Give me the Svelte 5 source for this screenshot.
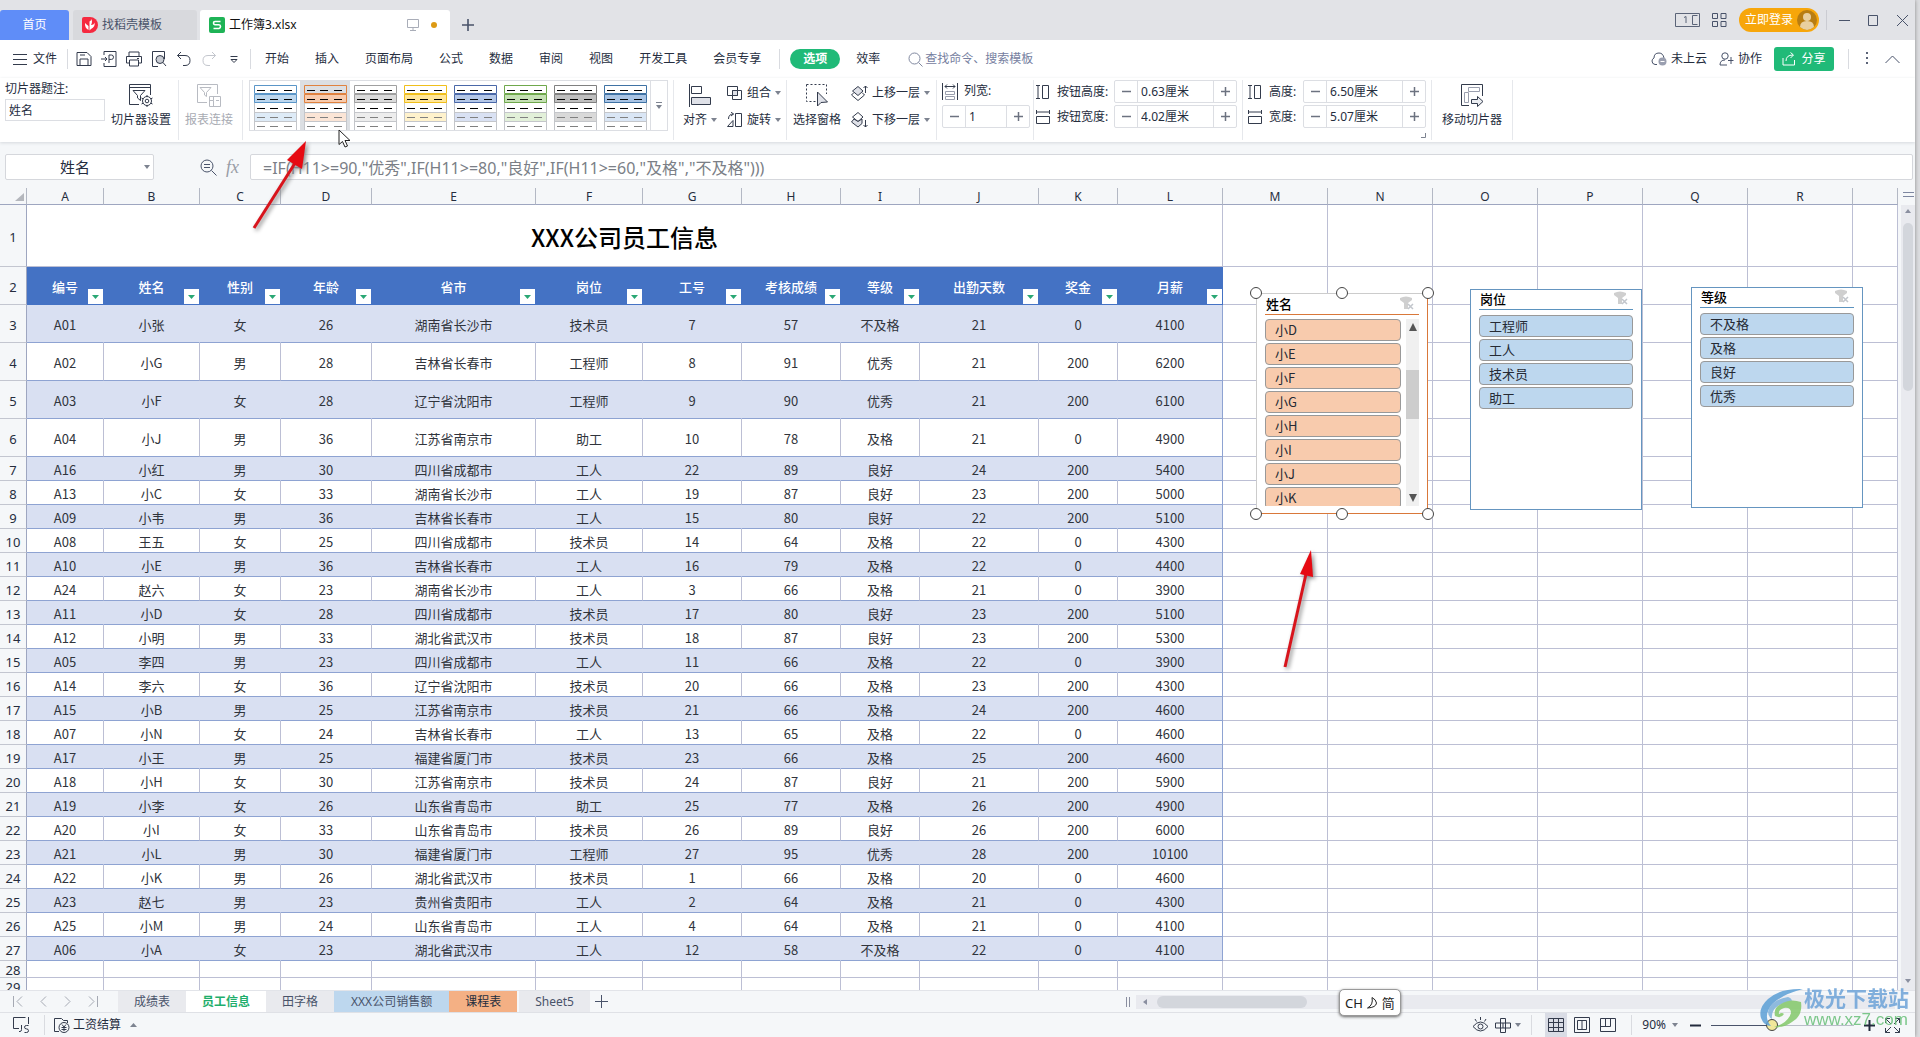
<script>
  const menus = ["开始", "插入", "页面布局", "公式", "数据", "审阅", "视图", "开发工具", "会员专享"];

  // line = frame colour, fill = selected item, soft = item without data
  const styles = [
    { line: "#5b96c8", fill: "#bdd7ee", soft: "#deebf7" },
    { line: "#e0823f", fill: "#f8cbad", soft: "#fbe5d6" },
    { line: "#a0a0a0", fill: "#dbdbdb", soft: "#ededed" },
    { line: "#f0bf1c", fill: "#ffe699", soft: "#fff2cc" },
    { line: "#4a68a8", fill: "#b4c7e7", soft: "#d9e1f3" },
    { line: "#6fa84c", fill: "#c5e0b4", soft: "#e2f0d9" },
    { line: "#808080", fill: "#bfbfbf", soft: "#d9d9d9" },
    { line: "#3f72a4", fill: "#a9c4e4", soft: "#dae6f5" }
  ];

  const columns = [
    { letter: "A", width: 77, title: "编号" },
    { letter: "B", width: 96, title: "姓名" },
    { letter: "C", width: 81, title: "性别" },
    { letter: "D", width: 91, title: "年龄" },
    { letter: "E", width: 164, title: "省市" },
    { letter: "F", width: 107, title: "岗位" },
    { letter: "G", width: 99, title: "工号" },
    { letter: "H", width: 99, title: "考核成绩" },
    { letter: "I", width: 79, title: "等级" },
    { letter: "J", width: 119, title: "出勤天数" },
    { letter: "K", width: 79, title: "奖金" },
    { letter: "L", width: 105, title: "月薪" }
  ];
  const emptyColumns = ["M", "N", "O", "P", "Q", "R"];
  const blanks = [0, 1, 2, 3, 4, 5, 6];

  const employees = [
    ["A01", "小张", "女", 26, "湖南省长沙市", "技术员", 7, 57, "不及格", 21, 0, 4100],
    ["A02", "小G", "男", 28, "吉林省长春市", "工程师", 8, 91, "优秀", 21, 200, 6200],
    ["A03", "小F", "女", 28, "辽宁省沈阳市", "工程师", 9, 90, "优秀", 21, 200, 6100],
    ["A04", "小J", "男", 36, "江苏省南京市", "助工", 10, 78, "及格", 21, 0, 4900],
    ["A16", "小红", "男", 30, "四川省成都市", "工人", 22, 89, "良好", 24, 200, 5400],
    ["A13", "小C", "女", 33, "湖南省长沙市", "工人", 19, 87, "良好", 23, 200, 5000],
    ["A09", "小韦", "男", 36, "吉林省长春市", "工人", 15, 80, "良好", 22, 200, 5100],
    ["A08", "王五", "女", 25, "四川省成都市", "技术员", 14, 64, "及格", 22, 0, 4300],
    ["A10", "小E", "男", 36, "吉林省长春市", "工人", 16, 79, "及格", 22, 0, 4400],
    ["A24", "赵六", "女", 23, "湖南省长沙市", "工人", 3, 66, "及格", 21, 0, 3900],
    ["A11", "小D", "女", 28, "四川省成都市", "技术员", 17, 80, "良好", 23, 200, 5100],
    ["A12", "小明", "男", 33, "湖北省武汉市", "技术员", 18, 87, "良好", 23, 200, 5300],
    ["A05", "李四", "男", 23, "四川省成都市", "工人", 11, 66, "及格", 22, 0, 3900],
    ["A14", "李六", "女", 36, "辽宁省沈阳市", "技术员", 20, 66, "及格", 23, 200, 4300],
    ["A15", "小B", "男", 25, "江苏省南京市", "技术员", 21, 66, "及格", 24, 200, 4600],
    ["A07", "小N", "女", 24, "吉林省长春市", "工人", 13, 65, "及格", 22, 0, 4600],
    ["A17", "小王", "男", 25, "福建省厦门市", "技术员", 23, 66, "及格", 25, 200, 4600],
    ["A18", "小H", "女", 30, "江苏省南京市", "技术员", 24, 87, "良好", 21, 200, 5900],
    ["A19", "小李", "女", 26, "山东省青岛市", "助工", 25, 77, "及格", 26, 200, 4900],
    ["A20", "小I", "女", 33, "山东省青岛市", "技术员", 26, 89, "良好", 26, 200, 6000],
    ["A21", "小L", "男", 30, "福建省厦门市", "工程师", 27, 95, "优秀", 28, 200, 10100],
    ["A22", "小K", "男", 26, "湖北省武汉市", "技术员", 1, 66, "及格", 20, 0, 4600],
    ["A23", "赵七", "男", 23, "贵州省贵阳市", "工人", 2, 64, "及格", 21, 0, 4300],
    ["A25", "小M", "男", 24, "山东省青岛市", "工人", 4, 64, "及格", 21, 0, 4100],
    ["A06", "小A", "女", 23, "湖北省武汉市", "工人", 12, 58, "不及格", 22, 0, 4100]
  ];
  const emptyRows = [28, 29];

  let names = ["小D", "小E", "小F", "小G", "小H", "小I", "小J", "小K"];
  let jobs = ["工程师", "工人", "技术员", "助工"];
  let grades = ["不及格", "及格", "良好", "优秀"];

  let selectedStyle = $state(1);
  let caption = $state("姓名");
  let zoom = $state(90);
</script>

{#snippet arrow()}
  <svg class="caret" width="6" height="4" viewBox="0 0 6 4"><path d="M0 0h6L3 4z" fill="#7d8390" /></svg>
{/snippet}

{#snippet spinner(id, value)}
  <div class="spinner">
    <button aria-label="减少"><svg width="9" height="9" viewBox="0 0 9 9"><path d="M0 4.5h9" /></svg></button>
    <input {id} type="text" {value} />
    <button aria-label="增加"><svg width="9" height="9" viewBox="0 0 9 9"><path d="M0 4.5h9M4.500 0v9" /></svg></button>
  </div>
{/snippet}

{#snippet clearFilter()}
  <button class="clear" aria-label="清除筛选器">
    <svg width="16" height="15" viewBox="0 0 16 15">
      <path d="M1 2q6-3 12 0v2l-4 3v6H5V7L1 4z" fill="#cfcfcf" />
      <path d="M9 8l5 5M14 8l-5 5" stroke="#c2c6cc" stroke-width="1.500" />
    </svg>
  </button>
{/snippet}

<div class="app">
  <header class="titlebar">
    <button class="home">首页</button>
    <button class="doc">
      <svg width="16" height="16" viewBox="0 0 16 16">
        <path d="M2 0h6a8 8 0 0 1 0 16H2q-2 0-2-2V2q0-2 2-2z" fill="#f5293f" />
        <path d="M7.500 13.500V4.500q2-1 1.500-2.500 2 2.500 0 6q3 0 3.500-2.500 1 4-3.500 6.500zM6.500 13Q2.500 11 3 6q2 2 3.500 3z" fill="#fff" />
      </svg>
      找稻壳模板
    </button>
    <button class="doc current">
      <svg width="16" height="16" viewBox="0 0 16 16">
        <rect width="16" height="16" rx="2" fill="#1eb356" />
        <path d="M11.500 4.500H6Q4.500 4.500 4.500 6T6 7.800h4q1.500 0 1.500 1.700T10 11.500H4.500" fill="none" stroke="#fff" stroke-width="1.600" />
      </svg>
      <span class="docname">工作簿3.xlsx</span>
      <svg width="12" height="12" viewBox="0 0 12 12" fill="none" stroke="#a9adb8"><path d="M.5.5h11v8H.5zM6 8.500v3M3 11.500h6" /></svg>
      <i class="dot"></i>
    </button>
    <button class="plain" aria-label="新建"><svg width="12" height="12" viewBox="0 0 12 12"><path d="M0 6h12M6 0v12" stroke="#49536a" stroke-width="1.600" /></svg></button>
    <div class="window-tools">
      <svg width="25" height="14" viewBox="0 0 25 14" fill="none" stroke="#5b6478"><path d="M.5.5h24v13H.5zM9 4.500l2-1V10M17.500 2.500h5M17.500 2.500v9h5" /></svg>
      <svg width="15" height="14" viewBox="0 0 15 14" fill="none" stroke="#49536a"><path d="M.5.5h5v5h-5zM9 .5h5v5H9zM.5 8.500h5v5h-5zM9 8.500h5v5H9z" /></svg>
      <button class="login">
        立即登录
        <svg width="20" height="20" viewBox="0 0 20 20">
          <circle cx="10" cy="10" r="10" fill="#b87d12" />
          <circle cx="10" cy="7" r="4" fill="#e9cf9f" />
          <path d="M3 17q0-6 7-6t7 6q-7 6-14 0z" fill="#e9cf9f" />
        </svg>
      </button>
      <i class="sep"></i>
      <button class="plain" aria-label="最小化"><svg width="11" height="11" viewBox="0 0 11 11"><path d="M0 5.500h11" stroke="#49536a" /></svg></button>
      <button class="plain" aria-label="最大化"><svg width="11" height="11" viewBox="0 0 11 11"><path d="M.5.5h9v10h-9z" fill="none" stroke="#49536a" /></svg></button>
      <button class="plain" aria-label="关闭"><svg width="11" height="11" viewBox="0 0 11 11"><path d="M0 0l11 11M11 0L0 11" stroke="#49536a" /></svg></button>
    </div>
  </header>

  <nav class="menubar">
    <button class="file">
      <svg width="14" height="11" viewBox="0 0 14 11"><path d="M0 .5h14M0 5.500h14M0 10.500h14" stroke="#333b4c" /></svg>
      文件
    </button>
    <i class="sep"></i>
    <div class="quick">
      <button class="plain" aria-label="保存"><svg width="16" height="16" viewBox="0 0 16 16"><path d="M1 1.500h10l4 4v9H1zM4 14.500V8h8v6.500M4 4h5" /></svg></button>
      <button class="plain" aria-label="输出为PDF"><svg width="16" height="16" viewBox="0 0 16 16"><path d="M3 4V.5h12v15H3V12M0 8h6M4 6l2 2-2 2M8 12V4h2.500q2 0 2 2.200t-2 2.200H8" /></svg></button>
      <button class="plain" aria-label="打印"><svg width="16" height="16" viewBox="0 0 16 16"><path d="M3 5V1h10v4M3 12H.5V5.500h15V12H13M3.500 9h9v6h-9zM11 7.500h2" /></svg></button>
      <button class="plain" aria-label="打印预览"><svg width="16" height="16" viewBox="0 0 16 16"><path d="M7 15.500H1.500V.5h12V8" /><circle cx="9" cy="8.500" r="4" fill="#c9ccd3" /><path d="M12 11.500l3 3.500" /></svg></button>
      <button class="plain" aria-label="撤销"><svg width="16" height="16" viewBox="0 0 16 16"><path d="M5 1L1.500 4.500 5 8M1.500 4.500H9q5 0 5 5t-5 5H7" /></svg></button>
      <button class="plain off" aria-label="恢复"><svg width="16" height="16" viewBox="0 0 16 16"><path d="M11 1l3.500 3.500L11 8M14.500 4.500H7q-5 0-5 5t5 5h2" /></svg></button>
      <button class="plain" aria-label="更多"><svg width="16" height="16" viewBox="0 0 16 16"><path d="M4.500 5.500h7M5 8.500h6l-3 3z" /></svg></button>
    </div>
    <i class="sep"></i>
    <div class="tabs">
      {#each menus as menu}
        <button class="plain">{menu}</button>
      {/each}
    </div>
    <i class="sep"></i>
    <button class="active">选项</button>
    <button class="plain">效率</button>
    <label class="search">
      <svg width="15" height="15" viewBox="0 0 15 15" fill="none" stroke="#8189a0"><circle cx="6.500" cy="6.500" r="5.500" /><path d="M10.500 10.500l4 4" /></svg>
      <input type="text" placeholder="查找命令、搜索模板" aria-label="查找命令、搜索模板" />
    </label>
    <div class="account">
      <button class="plain">
        <svg width="16" height="14" viewBox="0 0 16 14"><path d="M6 12.500H4Q1 12 1 9q0-2 2-3Q3 1 8 1q4 0 5 5" fill="none" stroke="#49536a" /><circle cx="11.500" cy="9.500" r="4" fill="#9a9fb0" /><path d="M9.500 9.500h4" stroke="#fff" /></svg>
        未上云
      </button>
      <button class="plain">
        <svg width="15" height="14" viewBox="0 0 15 14" fill="none" stroke="#49536a"><circle cx="6" cy="4" r="3.200" /><path d="M8 13H1q0-5 5-5M12 5v7M9 8.500h5.500" /></svg>
        协作
      </button>
      <button class="share">
        <svg width="14" height="14" viewBox="0 0 14 14" fill="none" stroke="#fff"><path d="M1 6v7h11.500V8M4 9q0-6 7-6M8.500.5L11.500 3 8.500 6" /></svg>
        分享
      </button>
      <i class="sep"></i>
      <button class="plain" aria-label="更多"><svg width="4" height="14" viewBox="0 0 4 14" fill="#5b6478"><path d="M1 0h2v2H1zM1 5h2v2H1zM1 10h2v2H1z" /></svg></button>
      <button class="plain" aria-label="收起"><svg width="15" height="9" viewBox="0 0 15 9" fill="none" stroke="#49536a"><path d="M.5 8l7-7 7 7" /></svg></button>
    </div>
  </nav>

  <div class="ribbon">
    <div class="group settings">
      <div class="caption">
        <label for="caption">切片器题注:</label>
        <input id="caption" type="text" bind:value={caption} />
      </div>
      <button class="big">
        <svg width="24" height="24" viewBox="0 0 24 24"><path d="M10 20.500H.5V.5h21V11M.5 3.500h21M4 6.500h12l-4.500 5v5L8.500 14v-2.500z" /><circle cx="18" cy="17" r="4.500" fill="#fff" /><circle cx="18" cy="17" r="1.800" /><path d="M18 11v2M18 21v2M12.500 14l2 1M21.500 19l2 1M12.500 20l2-1M21.500 15l2-1" /></svg>
        <span>切片器设置</span>
      </button>
    </div>
    <div class="group report">
      <button class="big off">
        <svg width="24" height="24" viewBox="0 0 24 24"><path d="M10 18.500H.5V.5h20V10M3 3.500h11l-4.500 5v4L7.500 11V8.500zM12.500 12.500h11v10h-11zM12.500 16.500h4v6M16.500 16.500v-4M19 16.500h3" /></svg>
        <span>报表连接</span>
      </button>
    </div>
    <div class="group gallery-group">
      <div class="gallery">
        {#each styles as style, i}
          <button class="thumb" class:selected={i === selectedStyle} onclick={() => (selectedStyle = i)} aria-label={"切片器样式 " + (i + 1)}>
            <svg width="43" height="46" viewBox="0 0 43 46" fill="none">
              <path d="M.5 9v37M42.500 9v37M0 27.500h43M0 36.500h43" stroke="#c4c6ca" />
              <path d="M1 19h41v8H1zM1 37h41v9H1z" fill="#fff" />
              <path d="M1 28h41v8H1z" fill={style.soft} />
              <path d="M.5.5h42v8H.5z" fill={i === 1 ? "#dcdfe3" : "#fff"} stroke={style.line} />
              <path d="M.5 9.500h42v8H.5z" fill={style.fill} stroke={style.line} />
              <path d="M3 5.500h8M16 5.500h8M30 5.500h8M3 14.500h8M16 14.500h8M30 14.500h8M3 23.500h8M16 23.500h8M30 23.500h8" stroke="#000" />
              <path d="M3 32.500h8M16 32.500h8M30 32.500h8M3 41.500h8M16 41.500h8M30 41.500h8" stroke="#808080" />
            </svg>
          </button>
        {/each}
        <button class="more" aria-label="更多样式"><svg width="6" height="7" viewBox="0 0 6 7"><path d="M0 .5h6" stroke="#7d8390" /><path d="M0 3h6L3 7z" fill="#7d8390" /></svg></button>
      </div>
    </div>
    <div class="group align">
      <button class="big">
        <svg width="24" height="24" viewBox="0 0 24 24"><path d="M1.500 0v23M3.500 2.500h10v7h-10z" /><path d="M3.500 13.500h19v7h-19z" fill="#dfe1e8" /></svg>
        <span>对齐 {@render arrow()}</span>
      </button>
      <div class="stack">
        <button>
          <svg width="16" height="16" viewBox="0 0 16 16"><path d="M.5 1.500h10v9H.5zM5.500 5.500h9v9h-9z" /><path d="M5.500 5.500h5v5h-5z" fill="#dfe1e8" /></svg>
          组合 {@render arrow()}
        </button>
        <button>
          <svg width="16" height="16" viewBox="0 0 16 16"><path d="M8.500 1.500h6v13h-6z" /><path d="M.5 14.500h5.500V8.500zM1.500 7q0-5 5-5M4 0l2.500 2L4 4" /></svg>
          旋转 {@render arrow()}
        </button>
      </div>
    </div>
    <div class="group arrange">
      <button class="big">
        <svg width="24" height="24" viewBox="0 0 24 24"><path d="M1.500.5h20V10M1.500.5v17h9" stroke-dasharray="2 2" /><path d="M12.500 8v14l3.500-3.500 6.500-.5z" fill="#dfe1e8" /></svg>
        <span>选择窗格</span>
      </button>
      <div class="stack">
        <button>
          <svg width="17" height="16" viewBox="0 0 17 16"><path d="M3 7.500L.5 10l6.500 5.500 6.500-5.500L11 7.500M14.500 8V1M12.500 3l2-2 2 2" /><path d="M7 1.500L1.500 6 7 10.500 12 6z" fill="#dfe1e8" /></svg>
          上移一层 {@render arrow()}
        </button>
        <button>
          <svg width="17" height="16" viewBox="0 0 17 16"><path d="M7 .5L1.500 5 7 9.500 12 5zM14.500 8v7M12.500 13l2 2 2-2" /><path d="M3 7L.5 10 7 15l4-3.500V7L7 9.500z" fill="#dfe1e8" /></svg>
          下移一层 {@render arrow()}
        </button>
      </div>
    </div>
    <div class="group colwidth">
      <label for="columns">
        <svg width="16" height="17" viewBox="0 0 16 17"><path d="M.5 0v17M15.500 0v17M3 3.500h10M5 1.500l-2 2 2 2M11 1.500l2 2-2 2" /><path d="M3.500 8.500h9v3h-9zM3.500 13.500h9v3h-9z" stroke="#9a9fae" /></svg>
        列宽:
      </label>
      {@render spinner("columns", "1")}
    </div>
    <div class="group sizes">
      <label for="bh"><svg width="14" height="14" viewBox="0 0 14 14"><path d="M0 .5h4M2 .5v13M0 13.500h4M6.500.5h6v13h-6z" /></svg>按钮高度:</label>
      {@render spinner("bh", "0.63厘米")}
      <label for="bw"><svg width="14" height="14" viewBox="0 0 14 14"><path d="M.5 0v4M.5 2h13M13.500 0v4M.5 6.500h13v7H.5z" /></svg>按钮宽度:</label>
      {@render spinner("bw", "4.02厘米")}
    </div>
    <div class="group sizes slicer-size">
      <label for="sh"><svg width="14" height="14" viewBox="0 0 14 14"><path d="M0 .5h4M2 .5v13M0 13.500h4M6.500.5h6v13h-6z" /></svg>高度:</label>
      {@render spinner("sh", "6.50厘米")}
      <label for="sw"><svg width="14" height="14" viewBox="0 0 14 14"><path d="M.5 0v4M.5 2h13M13.500 0v4M.5 6.500h13v7H.5z" /></svg>宽度:</label>
      {@render spinner("sw", "5.07厘米")}
      <svg class="launcher" width="5" height="5" viewBox="0 0 5 5"><path d="M4.500 0v4.500H0" stroke="#7d8390" /></svg>
    </div>
    <div class="group move">
      <button class="big">
        <svg width="24" height="24" viewBox="0 0 24 24"><path d="M9 21.500H1.500V.5h21V12" /><path d="M8.500 3.500h11v4h-11zM4.500 8.500h4v10h-4z" stroke="#9a9fae" /><path d="M11.500 15.500h6v-3l5.500 5-5.500 5v-3h-6z" fill="#eceef2" /></svg>
        <span>移动切片器</span>
      </button>
    </div>
  </div>

  <div class="formula">
    <div class="namebox">
      <input type="text" value="姓名" aria-label="名称框" />
      {@render arrow()}
    </div>
    <svg class="lens" width="17" height="17" viewBox="0 0 17 17" fill="none" stroke="#49536a"><circle cx="7" cy="7" r="6" /><path d="M11.500 11.500l5 5M4 5.500h6M4 8.500h6" /></svg>
    <span class="fx">fx</span>
    <input class="expression" type="text" aria-label="编辑栏" value={'=IF(H11>=90,"优秀",IF(H11>=80,"良好",IF(H11>=60,"及格","不及格")))'} />
  </div>

  <main class="work">
    <div class="sheet">
      <table>
        <colgroup>
          <col style="width: 27px" />
          {#each columns as column}
            <col style="width: {column.width}px" />
          {/each}
          {#each emptyColumns as letter}
            <col style="width: 105px" />
          {/each}
          <col />
        </colgroup>
        <thead>
          <tr class="letters">
            <th class="corner"><svg width="9" height="8" viewBox="0 0 9 8"><path d="M9 0v8H0z" fill="#b4b7bd" /></svg></th>
            {#each columns as column}
              <th>{column.letter}</th>
            {/each}
            {#each emptyColumns as letter}
              <th>{letter}</th>
            {/each}
            <th></th>
          </tr>
        </thead>
        <tbody>
          <tr class="caption-row">
            <th>1</th>
            <td class="title" colspan="12">XXX公司员工信息</td>
            {#each blanks as blank}<td></td>{/each}
          </tr>
          <tr class="titles tall">
            <th>2</th>
            {#each columns as column}
              <td class="field">
                {column.title}
                <button aria-label={"筛选" + column.title}><svg width="7" height="4" viewBox="0 0 7 4"><path d="M0 0h7L3.500 4z" fill="#2aa774" /></svg></button>
              </td>
            {/each}
            {#each blanks as blank}<td></td>{/each}
          </tr>
          {#each employees as employee, i}
            <tr class:tall={i < 4} class:band={i % 2 === 0}>
              <th>{i + 3}</th>
              {#each employee as value}
                <td class="data">{value}</td>
              {/each}
              {#each blanks as blank}<td></td>{/each}
            </tr>
          {/each}
          {#each emptyRows as row}
            <tr class="short">
              <th>{row}</th>
              {#each columns as column}<td></td>{/each}
              {#each blanks as blank}<td></td>{/each}
            </tr>
          {/each}
        </tbody>
      </table>

      <section class="slicer first">
        <h3>姓名 {@render clearFilter()}</h3>
        <div class="body">
          <div class="items">
            {#each names as name}
              <button>{name}</button>
            {/each}
          </div>
          <div class="scroll">
            <svg width="8" height="8" viewBox="0 0 8 8"><path d="M4 0l4 8H0z" fill="#555" /></svg>
            <i></i>
            <svg width="8" height="8" viewBox="0 0 8 8"><path d="M4 8L0 0h8z" fill="#555" /></svg>
          </div>
        </div>
        <b class="handle nw"></b><b class="handle n"></b><b class="handle ne"></b>
        <b class="handle sw"></b><b class="handle s"></b><b class="handle se"></b>
      </section>
      <section class="slicer second">
        <h3>岗位 {@render clearFilter()}</h3>
        <div class="items">
          {#each jobs as job}
            <button>{job}</button>
          {/each}
        </div>
      </section>
      <section class="slicer third">
        <h3>等级 {@render clearFilter()}</h3>
        <div class="items">
          {#each grades as grade}
            <button>{grade}</button>
          {/each}
        </div>
      </section>
    </div>
    <div class="vscroll">
      <svg class="split" width="11" height="6" viewBox="0 0 11 6"><path d="M0 .5h11M0 4.500h11" stroke="#7d86a0" /></svg>
      <div class="vtrack">
        <svg width="6" height="4" viewBox="0 0 6 4"><path d="M3 0l3 4H0z" fill="#8a8fa0" /></svg>
        <i></i>
        <svg width="6" height="4" viewBox="0 0 6 4"><path d="M0 0h6L3 4z" fill="#8a8fa0" /></svg>
      </div>
    </div>
  </main>

  <div class="sheetbar">
    <div class="jump">
      <button class="plain" aria-label="第一张"><svg width="10" height="11" viewBox="0 0 10 11"><path d="M.5 0v11M9 .5l-5 5 5 5" /></svg></button>
      <button class="plain" aria-label="上一张"><svg width="10" height="11" viewBox="0 0 10 11"><path d="M8 .5l-5 5 5 5" /></svg></button>
      <button class="plain" aria-label="下一张"><svg width="10" height="11" viewBox="0 0 10 11"><path d="M2 .5l5 5-5 5" /></svg></button>
      <button class="plain" aria-label="最后一张"><svg width="10" height="11" viewBox="0 0 10 11"><path d="M9.500 0v11M1 .5l5 5-5 5" /></svg></button>
    </div>
    <button class="tab">成绩表</button>
    <button class="tab open">员工信息</button>
    <button class="tab">田字格</button>
    <button class="tab blue">XXX公司销售额</button>
    <button class="tab orange">课程表</button>
    <button class="tab">Sheet5</button>
    <button class="add" aria-label="新建工作表"><svg width="13" height="13" viewBox="0 0 13 13"><path d="M0 6.500h13M6.500 0v13" stroke="#49536a" /></svg></button>
    <div class="hscroll">
      <svg width="4" height="10" viewBox="0 0 4 10"><path d="M.5 0v10M3.500 0v10" stroke="#8a8fa0" /></svg>
      <div class="htrack">
        <svg width="4" height="6" viewBox="0 0 4 6"><path d="M4 0v6L0 3z" fill="#8a8fa0" /></svg>
        <i></i>
      </div>
    </div>
  </div>

  <footer class="status">
    <button class="plain" aria-label="JS宏"><svg width="17" height="16" viewBox="0 0 17 16" fill="none" stroke="#333b4c"><path d="M6 11.500H.5V.5h12M15.500 0v7M6 14.500h1q1.500 0 1.500-2V8M15.500 8.500h-2q-2 0-2 1.700t2 1.700 2 1.800-2 1.800h-2" /></svg></button>
    <i class="sep"></i>
    <button class="plain pay">
      <svg width="16" height="16" viewBox="0 0 16 16" fill="none" stroke="#333b4c"><path d="M5 14.500H.5V1.500h7l2 2h4V6" /><circle cx="10" cy="10.500" r="5" /><path d="M8 7.500l2 2.500 2-2.500M7.500 10.500h5M7.500 12.500h5M10 10v4" /></svg>
      工资结算
      <svg class="up" width="7" height="4" viewBox="0 0 7 4"><path d="M3.500 0L7 4H0z" fill="#7d8390" /></svg>
    </button>
    <div class="views">
      <svg width="17" height="16" viewBox="0 0 17 16" fill="none" stroke="#333b4c"><path d="M1 9.500q7.500-9 15 0-7.500 9-15 0z" /><circle cx="8.500" cy="9.500" r="2.500" /><path d="M8.500 0v3M3 2l1.500 2.500M14 2l-1.500 2.500" /></svg>
      <button class="plain" aria-label="阅读模式"><svg width="16" height="15" viewBox="0 0 16 15" fill="none" stroke="#333b4c"><path d="M5.500.5h5v14h-5zM.5 5h15v5H.5zM8 5v5" /></svg>{@render arrow()}</button>
      <i class="sep"></i>
      <button class="view on" aria-label="普通视图"><svg width="16" height="14" viewBox="0 0 16 14" fill="none" stroke="#333b4c"><path d="M.5.5h15v13H.5zM.5 4.500h15M.5 9.500h15M5.500.5v13M10.500.5v13" /></svg></button>
      <button class="view" aria-label="页面布局"><svg width="16" height="16" viewBox="0 0 16 16" fill="none" stroke="#333b4c"><path d="M.5.5h15v15H.5zM3.500 3.500h9v9h-9zM8 3.500v9" /></svg></button>
      <button class="view" aria-label="分页预览"><svg width="16" height="14" viewBox="0 0 16 14" fill="none" stroke="#333b4c"><path d="M.5.5h15v13H.5zM.5 8.500h10M10.500.5v8M5.500.5v8" /></svg></button>
      <i class="sep"></i>
      <button class="plain percent">{zoom}%{@render arrow()}</button>
      <button class="plain" aria-label="缩小"><svg width="11" height="11" viewBox="0 0 11 11"><path d="M0 5.500h11" stroke="#222a3c" stroke-width="2" /></svg></button>
      <input type="range" min="10" max="200" bind:value={zoom} aria-label="缩放" />
      <button class="plain" aria-label="放大"><svg width="11" height="11" viewBox="0 0 11 11"><path d="M0 5.500h11M5.500 0v11" stroke="#222a3c" stroke-width="2" /></svg></button>
      <button class="plain" aria-label="全屏"><svg width="15" height="15" viewBox="0 0 15 15" fill="none" stroke="#333b4c"><path d="M5 .5H.5V5M.5.500L6 6M10 .5h4.500V5M14.500.5L9 6M5 14.500H.5V10M.5 14.500L6 9M10 14.500h4.500V10M14.500 14.500L9 9" /></svg></button>
    </div>
  </footer>

  <div class="ime">CH <svg width="11" height="12" viewBox="0 0 11 12" fill="none" stroke="#222"><path d="M5 .5q4 2 4.500 5.500-.5 4.500-9 5Q6.500 8 5 .5z" /></svg> 简</div>

  <svg class="pointer" width="13" height="19" viewBox="0 0 13 19"><path d="M1 1v14.500l3.500-3 2.500 5.500 2.500-1L7 11.500h5z" fill="#fff" stroke="#222" /></svg>

  <svg class="mark to-gallery" width="64" height="100" viewBox="0 0 64 100">
    <path d="M6 92L49 24" stroke="#d8141c" stroke-width="3" />
    <path d="M58 5L39 24l15 9z" fill="#e60a12" />
  </svg>
  <svg class="mark to-slicer" width="40" height="126" viewBox="0 0 40 126">
    <path d="M6 121L27 28" stroke="#d8141c" stroke-width="3" />
    <path d="M32 4L21 28l13 3z" fill="#e60a12" />
  </svg>

  <div class="brand">
    <svg width="43" height="40" viewBox="0 0 43 40">
      <path d="M43 1Q20 0 8 11-2 20 1 30q3 8 10 8-7-8-2-17Q16 8 43 1z" fill="#5c9fd6" />
      <path d="M28 9Q10 12 8 24q0 5 4 7-1-9 6-13 7-5 13-1 3-6-3-8z" fill="#7fb2dc" />
      <path d="M41 14q2 14-9 20-8 6-18 5 14-4 17-14 0-6-7-5-6 2-5 6 3-2 5 0-3 5-9 2-2-8 6-12 9-6 20-2z" fill="#83c96a" />
    </svg>
    <div>
      <strong>极光下载站</strong>
      <span>www.xz7.com</span>
    </div>
  </div>
</div>

<style>
  :global(body) {
    margin: 0;
    background: #dcdde0;
  }

  .app {
    position: relative;
    display: flex;
    flex-direction: column;
    height: 100vh;
    margin-right: 5px;
    background: #f5f7f9;
    box-shadow: 0 0 4px #888;
    overflow: hidden;
    color: #252d3e;
    font-family: "Noto Sans", "Noto Sans CJK SC", sans-serif;
    font-size: 12px;
    line-height: 16px;
  }

  .app * {
    box-sizing: border-box;
  }

  button,
  input {
    margin: 0;
    padding: 0;
    border: 0;
    outline: 0;
    background: none;
    color: inherit;
    font: inherit;
  }

  svg {
    flex: none;
    display: block;
  }

  .plain {
    display: flex;
    align-items: center;
    gap: 4px;
    white-space: nowrap;
  }

  .sep {
    flex: none;
    width: 1px;
    height: 20px;
    background: #d9dbe0;
  }

  /* Title bar */
  .titlebar {
    display: flex;
    align-items: flex-end;
    height: 40px;
    background: #e2e3e7;
  }

  .home {
    width: 69px;
    height: 30px;
    border-radius: 3px 3px 0 0;
    background: #5f8df8;
    color: #fff;
  }

  .doc {
    display: flex;
    align-items: center;
    gap: 4px;
    width: 124px;
    height: 30px;
    margin-left: 4px;
    padding-left: 9px;
    border-radius: 3px 3px 0 0;
    background: #d8d9dd;
    color: #49536a;
  }

  .doc.current {
    width: 250px;
    margin-left: 3px;
    background: #fff;
    color: #111;
  }

  .docname {
    flex: 1;
    text-align: left;
  }

  .dot {
    width: 6px;
    height: 6px;
    margin: 0 13px 0 8px;
    border-radius: 50%;
    background: #dc9a14;
  }

  .titlebar > .plain {
    height: 30px;
    padding: 0 12px;
  }

  .window-tools {
    display: flex;
    align-items: center;
    gap: 18px;
    height: 40px;
    margin-left: auto;
    padding-right: 7px;
  }

  .window-tools > svg:first-child {
    margin-right: -6px;
  }

  .login {
    display: flex;
    align-items: center;
    gap: 4px;
    height: 24px;
    margin: 0 -11px 0 -6px;
    padding: 0 2px 0 6px;
    border-radius: 12px;
    background: #f7a60a;
    color: #fff;
  }

  .window-tools .sep {
    margin-right: -6px;
    background: #cbccd2;
  }

  /* Menu */
  .menubar {
    display: flex;
    align-items: center;
    height: 38px;
    background: #fff;
  }

  .file {
    display: flex;
    align-items: center;
    gap: 6px;
    padding: 0 10px 0 13px;
  }

  .quick {
    display: flex;
    gap: 9px;
    padding: 0 8px 0 8px;
  }

  .quick svg {
    fill: none;
    stroke: #333b4c;
  }

  .quick .off svg {
    stroke: #c3c6cd;
  }

  .tabs {
    display: flex;
    gap: 26px;
    padding: 0 18px 0 14px;
  }

  .active {
    width: 50px;
    height: 20px;
    margin: 0 16px 0 10px;
    border-radius: 10px;
    background: #20ba78;
    color: #fff;
    font-weight: 700;
  }

  .search {
    display: flex;
    align-items: center;
    gap: 2px;
    margin-left: 28px;
  }

  .search input {
    width: 140px;
  }

  .search input::placeholder {
    color: #7680a0;
    opacity: 1;
  }

  .account {
    display: flex;
    align-items: center;
    gap: 12px;
    margin-left: auto;
    padding-right: 15px;
  }

  .share {
    display: flex;
    align-items: center;
    justify-content: center;
    gap: 5px;
    width: 60px;
    height: 24px;
    border-radius: 3px;
    background: #20ba78;
    color: #fff;
  }

  .account .sep {
    margin: 0 4px 0 2px;
  }

  .account .plain:last-child {
    margin-left: 4px;
  }

  /* Ribbon */
  .ribbon {
    display: flex;
    height: 64px;
    padding-top: 2px;
    background: #fff;
    box-shadow: 0 1px 3px #d5d8dd;
  }

  .ribbon svg {
    fill: none;
    stroke: #333b4c;
  }

  .ribbon .caret,
  .ribbon .more svg {
    stroke: none;
  }

  .ribbon .thumb svg {
    stroke: none;
  }

  .group {
    display: flex;
    flex: none;
    height: 60px;
    border-right: 1px solid #e6e8ec;
  }

  .big {
    display: flex;
    flex-direction: column;
    align-items: center;
    gap: 4px;
    height: 50px;
    padding-top: 4px;
    white-space: nowrap;
  }

  .big span,
  .stack button {
    display: flex;
    align-items: center;
    gap: 4px;
    white-space: nowrap;
  }

  .big.off {
    color: #a8abb3;
  }

  .big.off svg {
    stroke: #b8bbc2;
  }

  .stack {
    display: flex;
    flex-direction: column;
    gap: 11px;
    padding-top: 5px;
  }

  .settings {
    gap: 6px;
    padding: 0 7px 0 5px;
  }

  .caption {
    display: flex;
    flex-direction: column;
    gap: 2px;
    width: 100px;
    padding-top: 1px;
  }

  .caption input {
    width: 100%;
    height: 22px;
    padding: 0 3px;
    border: 1px solid #dcdee3;
  }

  .report {
    padding: 0 9px 0 6px;
  }

  .gallery-group {
    padding: 0 5px 0 6px;
  }

  .gallery {
    display: flex;
    height: 51px;
    border: 1px solid #dcdee3;
  }

  .thumb {
    display: flex;
    justify-content: center;
    width: 50px;
    padding-top: 4px;
    overflow: hidden;
  }

  .thumb.selected {
    background: #dcdfe3;
  }

  .more {
    display: flex;
    align-items: center;
    justify-content: center;
    width: 17px;
    border-left: 1px solid #dcdee3;
  }

  .align {
    gap: 10px;
    padding: 0 5px 0 9px;
  }

  .arrange {
    gap: 10px;
    padding: 0 6px 0 6px;
  }

  .colwidth {
    flex-direction: column;
    gap: 5px;
    padding: 2px 3px 0 5px;
  }

  .colwidth label {
    display: flex;
    align-items: center;
    gap: 6px;
    height: 18px;
  }

  .spinner {
    display: flex;
    width: 123px;
    height: 23px;
    border: 1px solid #dcdee3;
    border-radius: 2px;
  }

  .colwidth .spinner {
    width: 88px;
  }

  .spinner button {
    display: flex;
    flex: none;
    align-items: center;
    justify-content: center;
    width: 22px;
  }

  .spinner button svg {
    stroke: #6c7280;
    stroke-width: 1.5;
  }

  .spinner input {
    flex: 1;
    width: 20px;
    padding: 0 3px;
    border: solid #dcdee3;
    border-width: 0 1px;
  }

  .sizes {
    display: grid;
    grid-template-columns: 72px 123px;
    grid-template-rows: 23px 23px;
    gap: 2px 6px;
    padding: 0 5px 0 2px;
  }

  .slicer-size {
    grid-template-columns: 49px 123px;
    padding-left: 5px;
  }

  .sizes label {
    display: flex;
    align-items: center;
    gap: 7px;
    white-space: nowrap;
  }

  .launcher {
    grid-column: 2;
    justify-self: end;
    margin-top: 3px;
  }

  .move {
    padding: 0 10px;
  }

  /* Formula bar */
  .formula {
    display: flex;
    align-items: center;
    height: 46px;
    padding: 12px 2px 8px 5px;
    font-size: 15px;
    line-height: 20px;
  }

  .namebox {
    display: flex;
    align-items: center;
    width: 149px;
    height: 26px;
    padding-right: 3px;
    border: 1px solid #d5d7dc;
    border-radius: 2px;
    background: #fff;
  }

  .namebox input {
    flex: 1;
    width: 60px;
    text-align: center;
  }

  .lens {
    margin-left: 46px;
  }

  .fx {
    width: 33px;
    padding-left: 9px;
    color: #999da6;
    font-family: "Liberation Serif", serif;
    font-size: 18px;
    font-style: italic;
  }

  .expression {
    flex: 1;
    height: 26px;
    padding: 0 12px;
    border: 1px solid #d5d7dc;
    border-radius: 2px;
    background: #fff;
    color: #7b7f87;
    font-size: 16px;
  }

  /* Grid */
  .work {
    display: flex;
    flex: 1;
    min-height: 0;
  }

  .sheet {
    position: relative;
    flex: 1;
    overflow: hidden;
    background: #fff;
    font-family: "Noto Sans CJK SC", sans-serif;
    font-size: 13px;
  }

  table {
    width: 100%;
    table-layout: fixed;
    border-spacing: 0;
  }

  th,
  td {
    height: 24px;
    padding: 2px 0 0;
    border: solid #bcbfd4;
    border-width: 0 1px 1px 0;
    text-align: center;
    font-weight: 400;
    white-space: nowrap;
  }

  tbody th {
    border-color: #c3c6d0 #9ea6c0 #c3c6d0;
    background: #f5f7f9;
    font-family: "Noto Sans", sans-serif;
  }

  .letters th {
    height: 17px;
    border-right-color: #b3b8c4;
    border-bottom-color: #9ea6c0;
    background: #f5f7f9;
    font-family: "Noto Sans", sans-serif;
    font-size: 12px;
    line-height: 14px;
  }

  .corner svg {
    margin-left: 15px;
  }

  .caption-row th,
  .caption-row td {
    height: 62px;
  }

  .title {
    color: #000;
    font-size: 24px;
    font-weight: 500;
  }

  .tall th,
  .tall td {
    height: 38px;
  }

  .short th,
  .short td {
    height: 17px;
    line-height: 14px;
  }

  .field {
    position: relative;
    border-color: #4472c4;
    background: #4472c4;
    color: #fff;
    font-weight: 500;
  }

  .field button {
    position: absolute;
    right: 0;
    bottom: 0;
    display: flex;
    align-items: center;
    justify-content: center;
    width: 15px;
    height: 15px;
    background: #fff;
  }

  .data {
    border-bottom-color: #8ea3d2;
    color: #30343c;
  }

  .band .data {
    border-right-color: #d9e0f2;
    background: #d9e0f2;
  }

  .data:nth-child(13) {
    border-right-color: #8ea3d2;
  }

  /* Slicers float over the grid */
  .slicer {
    position: absolute;
    width: 172px;
    height: 221px;
    padding: 0 8px;
    border: 1px solid #6595c0;
    background: #fff;
  }

  .first {
    top: 105px;
    left: 1256px;
    padding-top: 1px;
    border-color: #ccc #d9783a #d9783a #ccc;
  }

  .second {
    top: 101px;
    left: 1470px;
  }

  .third {
    top: 99px;
    left: 1691px;
  }

  .slicer h3 {
    display: flex;
    align-items: center;
    justify-content: space-between;
    height: 20px;
    margin: 0 0 5px;
    padding: 0 4px 2px 1px;
    border-bottom: 1px solid #5b93bf;
    color: #000;
    font-size: 13px;
    font-weight: 500;
  }

  .first h3 {
    margin-bottom: 4px;
    border-color: #d9783a;
  }

  .items {
    display: flex;
    flex: 1;
    flex-direction: column;
    gap: 2px;
  }

  .items button {
    flex: none;
    height: 22px;
    padding: 0 9px;
    border: 1px solid #999;
    border-radius: 4px;
    background: #bdd7ee;
    color: #252a34;
    text-align: left;
  }

  .first .items button {
    background: #f8cbad;
  }

  .body {
    display: flex;
    gap: 5px;
    height: 187px;
    overflow: hidden;
  }

  .scroll {
    display: flex;
    flex-direction: column;
    align-items: center;
    justify-content: space-between;
    width: 13px;
    padding: 4px 0;
    background: #f0f0f0;
  }

  .scroll i {
    width: 13px;
    height: 49px;
    margin-bottom: 36px;
    background: #cdcdcd;
  }

  .handle {
    position: absolute;
    width: 12px;
    height: 12px;
    border: 1px solid #444;
    border-radius: 50%;
    background: #fff;
  }

  .nw, .n, .ne { top: -7px; }
  .sw, .s, .se { bottom: -7px; }
  .nw, .sw { left: -7px; }
  .n, .s { left: 79px; }
  .ne, .se { right: -7px; }

  .vscroll {
    display: flex;
    flex-direction: column;
    align-items: center;
    width: 17px;
    padding-left: 3px;
  }

  .split {
    margin: 4px 0 7px;
  }

  .vtrack {
    display: flex;
    flex: 1;
    flex-direction: column;
    align-items: center;
    width: 14px;
    padding: 4px 0 7px;
    background: #e9eaef;
  }

  .vtrack i {
    width: 10px;
    height: 168px;
    margin: 10px 0 auto;
    border-radius: 5px;
    background: #d3d6dc;
  }

  /* Sheet tabs */
  .sheetbar {
    display: flex;
    align-items: center;
    height: 22px;
    border-top: 1px solid #e2e4e9;
  }

  .jump {
    display: flex;
    gap: 15px;
    width: 118px;
    padding-left: 13px;
  }

  .jump svg {
    fill: none;
    stroke: #a5a9b3;
  }

  .tab {
    height: 21px;
    padding: 0 16px;
    background: #e9eaee;
    color: #49536a;
    white-space: nowrap;
  }

  .tab.open {
    background: #fff;
    color: #1fae6c;
    font-weight: 700;
  }

  .tab.blue {
    padding: 0 17px;
    background: #bdd7ee;
  }

  .tab.orange {
    margin-right: 2px;
    background: #f4b084;
    color: #252d3e;
  }

  .add {
    padding: 0 5px;
  }

  .hscroll {
    display: flex;
    flex: 1;
    align-items: center;
    gap: 6px;
    max-width: 789px;
    margin-left: auto;
    padding-right: 20px;
  }

  .htrack {
    display: flex;
    flex: 1;
    align-items: center;
    gap: 10px;
    height: 14px;
    padding-left: 7px;
    background: #e9eaef;
  }

  .htrack i {
    width: 150px;
    height: 12px;
    border-radius: 6px;
    background: #d3d6dc;
  }

  /* Status bar */
  .status {
    display: flex;
    align-items: center;
    gap: 9px;
    height: 25px;
    padding: 0 15px 0 13px;
    border-top: 1px solid #dfe1e6;
  }

  .status > .sep {
    margin-left: 5px;
  }

  .pay {
    gap: 3px;
  }

  .up {
    margin-left: 6px;
  }

  .views {
    display: flex;
    align-items: center;
    gap: 10px;
    margin-left: auto;
  }

  .views > svg {
    margin-right: -4px;
  }

  .view {
    display: flex;
    align-items: center;
    justify-content: center;
    width: 22px;
    height: 24px;
    margin-right: -6px;
  }

  .view.on {
    margin-left: 3px;
    background: #d9dce5;
  }

  .views .view + .sep {
    margin-left: 8px;
  }

  .percent {
    gap: 6px;
    margin-right: 2px;
  }

  input[type="range"] {
    width: 143px;
    height: 16px;
    appearance: none;
  }

  input[type="range"]::-webkit-slider-runnable-track {
    height: 1px;
    background: linear-gradient(90deg, #49536a 45%, #b9bdc8 45%);
  }

  input[type="range"]::-webkit-slider-thumb {
    width: 12px;
    height: 12px;
    margin-top: -6px;
    border: 1px solid #444;
    border-radius: 50%;
    background: #f1e79a;
    appearance: none;
  }

  /* Things that lie over the window */
  .ime {
    position: absolute;
    bottom: 21px;
    left: 1339px;
    display: flex;
    align-items: center;
    gap: 4px;
    height: 27px;
    padding: 0 5px;
    border: 1px solid #999;
    border-radius: 5px;
    background: #fff;
    box-shadow: 0 1px 3px #666;
    color: #222;
    font-size: 13px;
  }

  .pointer {
    position: absolute;
    top: 129px;
    left: 338px;
  }

  .mark {
    position: absolute;
    filter: drop-shadow(2px 2px 2px #888);
    pointer-events: none;
  }

  .to-gallery {
    top: 136px;
    left: 248px;
  }

  .to-slicer {
    top: 546px;
    left: 1279px;
  }

  .brand {
    position: absolute;
    right: 6px;
    bottom: 8px;
    display: flex;
    gap: 1px;
    opacity: 0.85;
    pointer-events: none;
  }

  .brand strong {
    display: block;
    color: #6da3d8;
    font-size: 21px;
    line-height: 20px;
  }

  .brand span {
    display: block;
    margin-top: 3px;
    color: #67bf78;
    font-family: "Liberation Sans", sans-serif;
    font-size: 17px;
    line-height: 18px;
  }
</style>
